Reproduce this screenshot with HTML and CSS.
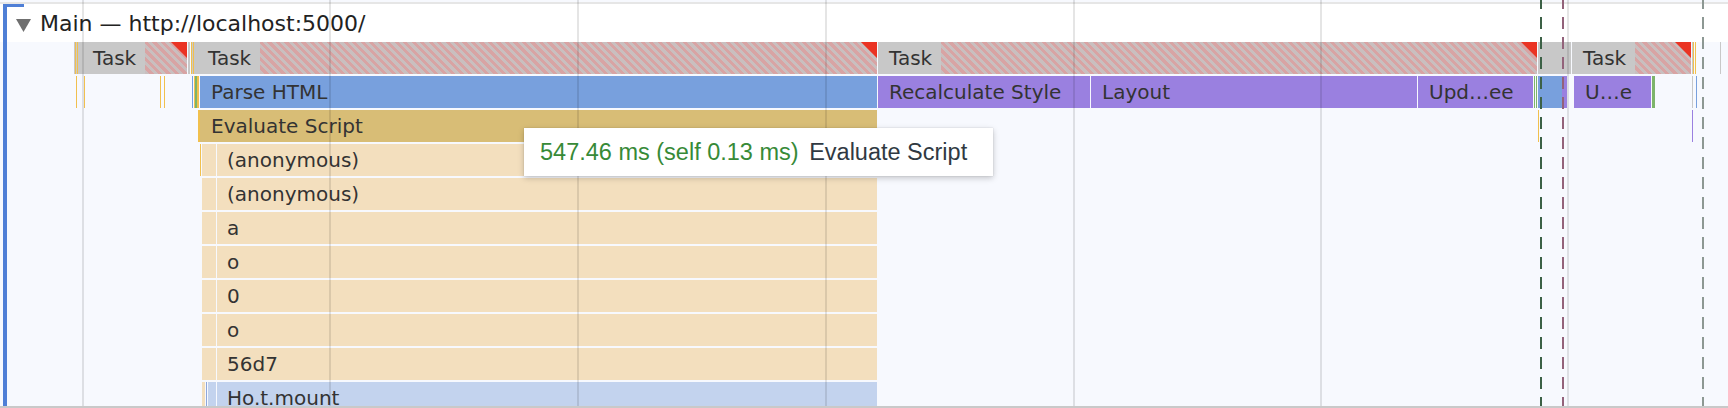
FILE: index.html
```html
<!DOCTYPE html>
<html lang="en">
<head>
    <meta charset="UTF-8">
    <title>Performance — Main</title>
    <link rel="stylesheet" href="styles.css">
</head>
<body>
    <div class="panel">
        <div class="header">
            <svg class="arrow" width="15" height="13" viewBox="0 0 15 13"><polygon points="0,0 15,0 7.5,13" fill="#6f6f6f"/></svg>
            <span class="title">Main — http://localhost:5000/</span>
        </div>
        <div class="tracks" id="tracks"></div>

        <div class="overlay" id="overlay"></div>

        <div class="tooltip">
            <span class="time">547.46 ms (self 0.13 ms)</span>
            <span class="name">Evaluate Script</span>
        </div>
    </div>

    <script>
        // [start, end, kind, label]
        const rows = [
            [[74,75,'tk'],[75,76,'yl'],[76,77,'tk'],[77,78,'yl'],[78,82,'tk'],
             [82,187,'task long','Task'],
             [188,190,'tk'],[191,192,'yl'],[192,193,'tk'],[193,194,'yl'],[194,197,'tk'],
             [197,877,'task long','Task'],[878,1537,'task long','Task'],[1538,1571,'task'],
             [1572,1691,'task long','Task'],[1692,1693,'tk'],[1693,1694,'yl'],[1695,1696,'yl'],[1720,1721,'tk']],
            [[76,77,'yl'],[84,85,'yl'],[160,161,'yl'],[164,165,'yl'],
             [192,193,'bl'],[194,195,'yl'],[195,197,'gr'],[197,199,'yl'],
             [200,877,'load','Parse HTML'],[878,1090,'rend','Recalculate Style'],[1091,1417,'rend','Layout'],
             [1418,1533,'rend','Upd…ee'],[1534,1535,'gr'],[1536,1537,'gr'],[1538,1562,'load'],[1562,1567,'rend'],
             [1574,1651,'rend','U…e'],[1652,1655,'gr'],[1692,1693,'tk'],[1696,1697,'bl']],
            [[198,200,'yl'],[200,877,'eval','Evaluate Script'],[1538,1539,'yl'],[1692,1693,'pl']],
            [[200,201,'yl'],[202,216,'fn'],[217,877,'fn','(anonymous)']],
            [[202,216,'fn'],[217,877,'fn','(anonymous)']],
            [[202,216,'fn'],[217,877,'fn','a']],
            [[202,216,'fn'],[217,877,'fn','o']],
            [[202,216,'fn'],[217,877,'fn','0']],
            [[202,216,'fn'],[217,877,'fn','o']],
            [[202,216,'fn'],[217,877,'fn','56d7']],
            [[202,205,'fn'],[206,207,'bd'],[208,216,'hm'],[217,877,'hm','Ho.t.mount']]
        ];

        const tracks = document.getElementById('tracks');
        for (const row of rows) {
            const r = document.createElement('div');
            r.className = 'row';
            let x = 0;
            for (const [start, end, kind, label] of row) {
                const b = document.createElement('div');
                b.className = 'bar ' + kind + (label ? ' lbl' : '');
                b.style.marginLeft = (start - x) + 'px';
                b.style.width = (end - start) + 'px';
                if (label) b.textContent = label;
                r.appendChild(b);
                x = end;
            }
            tracks.appendChild(r);
        }

        // grid + markers
        const overlay = document.getElementById('overlay');
        for (const x of [82, 329, 577, 825, 1073, 1320, 1567]) {
            const g = document.createElement('div');
            g.className = 'grid';
            g.style.left = x + 'px';
            overlay.appendChild(g);
        }
        for (const [x, kind] of [[1540, 'dcl'], [1562, 'lcp'], [1702, 'load-mark']]) {
            const m = document.createElement('div');
            m.className = 'marker ' + kind;
            m.style.left = x + 'px';
            overlay.appendChild(m);
        }
    </script>
</body>
</html>
```

FILE: styles.css
```css
html, body {
    margin: 0;
    background: #fff;
    overflow: hidden;
}
.panel {
    position: relative;
    width: 1728px;
    height: 406px;
    border-bottom: 2px solid #c9c9c9;
    overflow: hidden;
    background: #f7f9fe;
}
.panel::before {
    content: "";
    position: absolute;
    left: 3px;
    top: 4px;
    width: 21px;
    height: 420px;
    border-left: 4px solid #4f7fd6;
    border-top: 3px solid #4f7fd6;
    box-sizing: border-box;
    z-index: 5;
}
.header {
    margin-top: 2px;
    border-top: 2px solid #e6e6e6;
    height: 36px;
    padding-top: 2px;
    background: #fff;
    display: flex;
    align-items: center;
    font-family: "DejaVu Sans", sans-serif;
    font-size: 22px;
    line-height: 36px;
    color: #222;
}
.arrow {
    margin-left: 16px;
    margin-right: 9px;
    margin-top: 2px;
}
.title {
    white-space: nowrap;
}
.tracks {
    font-family: "DejaVu Sans", sans-serif;
    font-size: 20px;
    color: #333;
}
.row {
    display: flex;
    height: 32px;
    margin-bottom: 2px;
}
.bar {
    flex: none;
    height: 32px;
    line-height: 32px;
    box-sizing: border-box;
    white-space: nowrap;
    overflow: hidden;
    position: relative;
}
.bar.lbl {
    padding-left: 11px;
}
.bar.fn.lbl, .bar.hm.lbl {
    padding-left: 10px;
}
.tk { background: #c8c8c8; }
.yl { background: #f1c04e; }
.gr { background: #7db46b; }
.bl { background: #78a0dd; }
.pl { background: #9a80e0; }
.bd { background: #8ea6d8; }
.task {
    background: #c8c8c8;
}
.task.long {
    background:
        linear-gradient(to right, #c8c8c8 0 63px, transparent 63px),
        repeating-linear-gradient(45deg, #d8a4a4 0 3px, #c9bfbf 3px 6px);
}
.task.long::after {
    content: "";
    position: absolute;
    top: 0;
    right: 0;
    border-top: 16px solid #ea3323;
    border-left: 16px solid transparent;
}
.load { background: #78a0dd; }
.rend { background: #9a80e0; }
.eval { background: #d8bd76; }
.fn { background: #f3dfbe; }
.hm { background: #c3d3ee; }
.overlay {
    position: absolute;
    inset: 0;
    pointer-events: none;
}
.grid {
    position: absolute;
    top: 0;
    bottom: 0;
    width: 2px;
    background: rgba(0, 0, 0, 0.1);
}
.marker {
    position: absolute;
    top: -3px;
    bottom: 0;
    width: 2px;
}
.dcl { background: repeating-linear-gradient(to bottom, #3c6146 0 12px, transparent 12px 20px); }
.lcp { background: repeating-linear-gradient(to bottom, #93627a 0 12px, transparent 12px 20px); }
.load-mark { background: repeating-linear-gradient(to bottom, #8d9893 0 12px, transparent 12px 20px); }
.tooltip {
    position: absolute;
    left: 524px;
    top: 128px;
    height: 48px;
    padding: 0 26px 0 16px;
    background: #fff;
    box-shadow: 0 2px 6px rgba(0, 0, 0, 0.22), 0 0 1px rgba(0, 0, 0, 0.2);
    font-family: "Liberation Sans", Arial, sans-serif;
    font-size: 23.5px;
    line-height: 48px;
    white-space: nowrap;
    z-index: 10;
}
.time {
    color: #378a37;
    margin-right: 4px;
}
.name {
    color: #303942;
}
```
